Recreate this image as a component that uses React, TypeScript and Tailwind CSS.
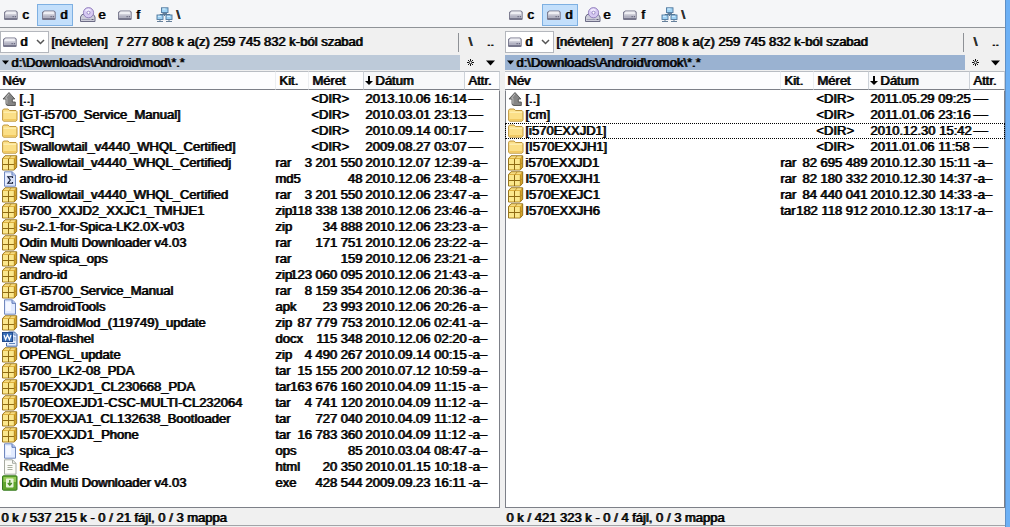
import React from "react";

type Kind = "up" | "folder" | "archive" | "hash" | "file" | "word" | "html" | "exe";

interface Entry {
  kind: Kind;
  name: string;
  ext?: string;
  size?: string;
  date: string;
  focused?: boolean;
}

interface PanelData {
  id: string;
  path: string;
  active: boolean;
  status: string;
  entries: Entry[];
}

const leftPanel: PanelData = {
  id: "left",
  path: "d:\\Downloads\\Android\\mod\\*.*",
  active: false,
  status: "0 k / 537 215 k - 0 / 21 fájl, 0 / 3 mappa",
  entries: [
    { kind: "up", name: "[..]", date: "2013.10.06 16:14" },
    { kind: "folder", name: "[GT-i5700_Service_Manual]", date: "2010.03.01 23:13" },
    { kind: "folder", name: "[SRC]", date: "2010.09.14 00:17" },
    { kind: "folder", name: "[Swallowtail_v4440_WHQL_Certified]", date: "2009.08.27 03:07" },
    { kind: "archive", name: "Swallowtail_v4440_WHQL_Certifiedj", ext: "rar", size: "3 201 550", date: "2010.12.07 12:39" },
    { kind: "hash", name: "andro-id", ext: "md5", size: "48", date: "2010.12.06 23:48" },
    { kind: "archive", name: "Swallowtail_v4440_WHQL_Certified", ext: "rar", size: "3 201 550", date: "2010.12.06 23:47" },
    { kind: "archive", name: "i5700_XXJD2_XXJC1_TMHJE1", ext: "zip", size: "118 338 138", date: "2010.12.06 23:46" },
    { kind: "archive", name: "su-2.1-for-Spica-LK2.0X-v03", ext: "zip", size: "34 888", date: "2010.12.06 23:23" },
    { kind: "archive", name: "Odin Multi Downloader v4.03", ext: "rar", size: "171 751", date: "2010.12.06 23:22" },
    { kind: "archive", name: "New spica_ops", ext: "rar", size: "159", date: "2010.12.06 23:21" },
    { kind: "archive", name: "andro-id", ext: "zip", size: "123 060 095", date: "2010.12.06 21:43" },
    { kind: "archive", name: "GT-i5700_Service_Manual", ext: "rar", size: "8 159 354", date: "2010.12.06 20:36" },
    { kind: "file", name: "SamdroidTools", ext: "apk", size: "23 993", date: "2010.12.06 20:26" },
    { kind: "archive", name: "SamdroidMod_(119749)_update", ext: "zip", size: "87 779 753", date: "2010.12.06 02:41" },
    { kind: "word", name: "rootal-flashel", ext: "docx", size: "115 348", date: "2010.12.06 02:20" },
    { kind: "archive", name: "OPENGL_update", ext: "zip", size: "4 490 267", date: "2010.09.14 00:15" },
    { kind: "archive", name: "i5700_LK2-08_PDA", ext: "tar", size: "15 155 200", date: "2010.07.12 10:59" },
    { kind: "archive", name: "I570EXXJD1_CL230668_PDA", ext: "tar", size: "163 676 160", date: "2010.04.09 11:15" },
    { kind: "archive", name: "I570EOXEJD1-CSC-MULTI-CL232064", ext: "tar", size: "4 741 120", date: "2010.04.09 11:12" },
    { kind: "archive", name: "I570EXXJA1_CL132638_Bootloader", ext: "tar", size: "727 040", date: "2010.04.09 11:12" },
    { kind: "archive", name: "I570EXXJD1_Phone", ext: "tar", size: "16 783 360", date: "2010.04.09 11:12" },
    { kind: "file", name: "spica_jc3", ext: "ops", size: "85", date: "2010.03.04 08:47" },
    { kind: "html", name: "ReadMe", ext: "html", size: "20 350", date: "2010.01.15 10:18" },
    { kind: "exe", name: "Odin Multi Downloader v4.03", ext: "exe", size: "428 544", date: "2009.09.23 16:11" },
  ],
};

const rightPanel: PanelData = {
  id: "right",
  path: "d:\\Downloads\\Android\\romok\\*.*",
  active: true,
  status: "0 k / 421 323 k - 0 / 4 fájl, 0 / 3 mappa",
  entries: [
    { kind: "up", name: "[..]", date: "2011.05.29 09:25" },
    { kind: "folder", name: "[cm]", date: "2011.01.06 23:16" },
    { kind: "folder", name: "[i570EXXJD1]", date: "2010.12.30 15:42", focused: true },
    { kind: "folder", name: "[I570EXXJH1]", date: "2011.01.06 11:58" },
    { kind: "archive", name: "i570EXXJD1", ext: "rar", size: "82 695 489", date: "2010.12.30 15:11" },
    { kind: "archive", name: "I570EXXJH1", ext: "rar", size: "82 180 332", date: "2010.12.30 14:37" },
    { kind: "archive", name: "I570EXEJC1", ext: "rar", size: "84 440 041", date: "2010.12.30 14:33" },
    { kind: "archive", name: "I570EXXJH6", ext: "tar", size: "182 118 912", date: "2010.12.30 13:17" },
  ],
};

function DriveIcon() {
  return (
    <svg width="16" height="16" viewBox="0 0 16 16" className="block shrink-0" aria-hidden="true">
      <path d="M2.300 3.500h9.700l1.700 1.500v7.200l-.8.800H.8L0 12.200V5.300z" fill="#77778c" />
      <path d="M2.600 4.300h9l1.200 1.200v5.500H.9V5.700z" fill="#cfcfd9" />
      <path d="M2.400 4.800h9.200l.6 2.200H1.300z" fill="#efeff4" />
      <path d="M1 8.500h11.600V11H1z" fill="#b2b2c2" />
      <path d="M8.500 9.700h1.300M10.800 9.700h1.300" stroke="#5c5c74" />
    </svg>
  );
}

function DiscIcon() {
  return (
    <svg width="16" height="16" viewBox="0 0 16 16" className="block shrink-0" aria-hidden="true">
      <path d="M2 7.500h11.500l1.500 2.500v4.500H.5V10z" fill="#cdcdd9" stroke="#6c6c86" />
      <path d="M1.500 12.500h9" stroke="#9d9db3" />
      <circle cx="8.500" cy="5.700" r="5.100" fill="#d6c9f2" stroke="#8b78b8" strokeWidth=".9" />
      <path d="M5 3.500a4 4 0 0 1 6-.6L8.500 5.800z" fill="#f1eaff" />
      <circle cx="8.500" cy="5.700" r="1.500" fill="#fff" stroke="#8773b8" strokeWidth=".8" />
      <path d="M11.500 12.500h2" stroke="#5c5c74" />
    </svg>
  );
}

function NetworkIcon() {
  return (
    <svg width="18" height="16" viewBox="0 0 18 16" className="block shrink-0" aria-hidden="true">
      <path d="M8.500 6v3M4 9V7.500h10V9" fill="none" stroke="#5a7894" />
      <g fill="#9fd2f3" stroke="#4e779d" strokeWidth=".9">
        <rect x="5.500" y=".8" width="6.500" height="4.700" />
        <rect x="1" y="8" width="6" height="4.500" />
        <rect x="10" y="8" width="6" height="4.500" />
      </g>
      <path d="M6.500 2h3M2 9.300h3M11 9.300h3" stroke="#daf1ff" />
      <path d="M6.500 6.500h4.500M1 14.500h6M10 14.500h6M4 12.500v2M13 12.500v2" stroke="#66809b" />
    </svg>
  );
}

function FileIcon({ kind }: { kind: Kind }) {
  return (
    <svg width="16" height="16" viewBox="0 0 16 16" className="block shrink-0" aria-hidden="true">
      {kind === "up" && (
        <>
          <path d="M7 1.500 12.800 8h-2.500v3h3v3.500H6a2 2 0 0 1-2-2V8H1z" fill="#858585" stroke="#515151" strokeWidth=".9" strokeLinejoin="round" />
          <path d="M7 2.800 3.500 7.300h1.400v5.500" fill="none" stroke="#b8b8b8" />
        </>
      )}
      {kind === "folder" && (
        <>
          <path d="M.6 3.200 1.600 2h4.500l1.400 1.500H14l1 1.200V13l-1 1.200H1.500L.6 13z" fill="#fbdf87" stroke="#b98c2e" strokeWidth=".9" />
          <path d="M1.500 5.200h12.700" stroke="#fff3bd" />
          <path d="M1.500 12h12.700v1.400H1.500z" fill="#f1c860" />
        </>
      )}
      {kind === "archive" && (
        <>
          <path d="M.5 3.500 3 .8h11.700v11.400l-2.500 2.800H.5z" fill="#d6a528" stroke="#8f6b14" strokeWidth=".9" />
          <path d="M1.300 3.300 3.300 1.300h10.500L12 3.300z" fill="#f6dc82" />
          <path d="M1 4h11v10.500H1z" fill="#fbe78c" />
          <path d="M6.500 4v11M1 9.500h11" fill="none" stroke="#8f6b14" />
          <path d="M12.300 4v11M12.500 9.300l2.200-2.200M6.800 4 9 1" fill="none" stroke="#b08420" strokeWidth=".8" />
        </>
      )}
      {(kind === "file" || kind === "hash") && (
        <>
          <path d="M2.500.8h7.700L13.500 4v11.200h-11z" fill="#e2ebff" stroke="#7188bd" />
          <path d="M4 3h5v9H4z" fill="#f5f8ff" />
          <path d="M10 1v3.300h3.400" fill="#b4c8f4" stroke="#617ab5" />
          {kind === "hash" && (
            <>
              <path d="M4.500 4.500h8.500v9H4.500z" fill="#d8e1f8" />
              <path d="M10.500 7V5.700H5.800L8.300 9l-2.500 3.300h4.700V11" fill="none" stroke="#111a33" strokeWidth="1.100" />
            </>
          )}
        </>
      )}
      {kind === "word" && (
        <>
          <path d="M6.500 1h6l2.500 2.500v11.700H4.500V12" fill="#e3edff" stroke="#4669a5" />
          <path d="M12 1v3h3M11.500 7h2M11.500 9h2M7 12.500h6" fill="none" stroke="#5f85bd" />
          <rect x=".5" y="1.500" width="10" height="9" fill="#386eb7" stroke="#20498c" />
          <path d="m2 4 1.600 4.500L5.500 4l1.900 4.500L9 4" fill="none" stroke="#fff" strokeWidth="1.200" />
        </>
      )}
      {kind === "html" && (
        <>
          <path d="M2.500.8h8L14 4.300v10.900H2.500z" fill="#fcfcf8" stroke="#a6aaa0" />
          <path d="M10.500 1v3.300H14" fill="none" stroke="#a6aaa0" />
          <path d="M5.500 6.500h5M5.500 8.500h5M5.500 10.500h5" stroke="#aab09f" />
        </>
      )}
      {kind === "exe" && (
        <>
          <rect x=".5" y=".8" width="14.500" height="14.400" rx="1" fill="#61a52e" stroke="#34791c" />
          <path d="M1.500 2h12.500v5H1.500z" fill="#93c957" />
          <rect x="4" y="3.500" width="7.500" height="9" rx=".7" fill="#e9f5d9" />
          <path d="M7.800 5v5M5.800 8l2 2.300 2-2.300" fill="none" stroke="#448921" strokeWidth="1.300" />
        </>
      )}
    </svg>
  );
}

const drives = [
  { label: "c", icon: <DriveIcon /> },
  { label: "d", icon: <DriveIcon />, current: true },
  { label: "e", icon: <DiscIcon /> },
  { label: "f", icon: <DriveIcon /> },
  { label: "\\", icon: <NetworkIcon /> },
];

function DriveBar() {
  return (
    <nav aria-label="Meghajtók" className="-ml-px flex h-7 items-center gap-0.5 border-b border-[#8f9398] bg-[#f5f6f8] pt-0.5">
      {drives.map((d) => (
        <button
          key={d.label}
          aria-pressed={!!d.current}
          className={
            d.current
              ? "flex h-[22px] w-9 items-center gap-0.5 border border-[#7eb0e2] bg-[#c3dffb] px-1"
              : "flex h-[22px] w-9 items-center gap-0.5 border border-transparent px-1"
          }
        >
          {d.icon}
          <span>{d.label}</span>
        </button>
      ))}
    </nav>
  );
}

function Panel({ data }: { data: PanelData }) {
  const line = data.active ? "border-l border-[#7d8088]" : "border-[#7d8088]";
  return (
    <section className="flex min-w-0 flex-1 flex-col">
      <DriveBar />
      <div className="flex flex-1 flex-col">
        <div className="mt-[3px] flex h-[22px] items-center">
          <div className="relative mr-0.5">
            <div className="pointer-events-none absolute top-[3px] left-[3px]">
              <DriveIcon />
            </div>
            <select aria-label="Meghajtó" className="block h-[22px] w-[49px] appearance-none border border-[#b4b7bd] bg-white pl-[19px]" defaultValue="d">
              <option>c</option>
              <option>d</option>
              <option>e</option>
              <option>f</option>
            </select>
            <svg width="9" height="6" viewBox="0 0 9 6" className="pointer-events-none absolute top-2 right-1" aria-hidden="true">
              <path d="m1 1 3.500 3.500L8 1" fill="none" stroke="#555" strokeWidth="1.500" />
            </svg>
          </div>
          <div className="flex flex-1 gap-2 whitespace-nowrap">
            <span>[névtelen]</span>
            <span>7 277 808 k a(z) 259 745 832 k-ból szabad</span>
          </div>
          <div className="flex h-[19px] w-[42px] items-center border-l border-[#8e9196]">
            <button aria-label="Gyökérmappa" className="w-[22px]">\</button>
            <button aria-label="Szülőmappa" className="w-[18px]">..</button>
          </div>
        </div>
        <div className="mt-0.5 flex h-[15px] items-center">
          <div
            className={
              data.active
                ? "flex h-[15px] flex-1 items-center gap-px bg-[#9ab2d1] pl-0.5"
                : "flex h-[15px] flex-1 items-center gap-px bg-[#bdcad9] pl-0.5"
            }
          >
            <svg width="8" height="5" viewBox="0 0 8 5" aria-hidden="true">
              <path d="M0 .5h7L3.500 4.500z" />
            </svg>
            <span>{data.path}</span>
          </div>
          <button aria-label="Kedvencek" className="flex w-5 justify-center">
            <svg width="9" height="9" viewBox="0 0 9 9" aria-hidden="true">
              <path d="M4.500 1v7M1 4.500h7M2 2l5 5M7 2l-5 5" stroke="#111" />
              <rect x="3.500" y="3.500" width="2" height="2" fill="#fff" />
            </svg>
          </button>
          <button aria-label="Előzmények" className="flex w-5 justify-center">
            <svg width="9" height="6" viewBox="0 0 9 6" aria-hidden="true">
              <path d="M0 .5h9L4.500 5.500z" />
            </svg>
          </button>
        </div>
        <table className="mt-px w-full table-fixed border-separate border-spacing-0 bg-white">
          <colgroup>
            <col />
            <col className="w-[33px]" />
            <col className="w-[55px]" />
            <col className="w-[102px]" />
            <col className="w-[35px]" />
          </colgroup>
          <thead>
            <tr className="h-[19px] bg-[#fdfdfe] text-left [&>th]:border-t [&>th]:border-b [&>th]:border-t-[#b9bdc3] [&>th]:border-b-[#7d8088] [&>th]:font-normal">
              <th className="pl-0.5">Név</th>
              <th className="border-l border-l-[#eceef1] pl-[3px]">Kit.</th>
              <th className="border-l border-l-[#eceef1] pl-[3px]">Méret</th>
              <th className="border-x border-x-[#cdd2d9] bg-[#f7f8fa]">
                <span className="flex items-center gap-0.5 pl-px">
                  <svg width="8" height="9" viewBox="0 0 8 9" aria-hidden="true">
                    <path d="M3 0h2v5h3L4 9 0 5h3z" />
                  </svg>
                  Dátum
                </span>
              </th>
              <th className="border-r border-r-[#cdd2d9] pl-[3px]">Attr.</th>
            </tr>
          </thead>
          <tbody className="[&>tr:first-child>td]:border-t [&>tr:first-child>td]:border-t-white">
            {data.entries.map((e, i) => (
              <tr
                key={i}
                className={
                  e.focused
                    ? "h-4 whitespace-nowrap outline-1 -outline-offset-1 outline-dotted outline-black"
                    : "h-4 whitespace-nowrap"
                }
              >
                <td className={line}>
                  <span className="flex items-center gap-px pl-0.5">
                    <FileIcon kind={e.kind} />
                    {e.name}
                  </span>
                </td>
                <td>{e.ext}</td>
                <td>
                  {e.size ? (
                    <span className="flex justify-end pr-px">{e.size}</span>
                  ) : (
                    <span className="pl-[3px]">&lt;DIR&gt;</span>
                  )}
                </td>
                <td className="pl-0.5">{e.date}</td>
                <td className="border-r border-[#7d8088] pl-[3px]">{e.size ? "-a–" : "––"}</td>
              </tr>
            ))}
          </tbody>
        </table>
        <div
          className={
            data.active
              ? "flex-1 border-x border-b border-[#7d8088] bg-white"
              : "flex-1 border-r border-b border-[#7d8088] bg-white"
          }
        />
        <footer className="mb-px flex h-[18px] items-center border-b border-[#a2a4a8] pt-0.5 pl-px">{data.status}</footer>
      </div>
    </section>
  );
}

export default function App() {
  return (
    <main className="flex min-h-screen bg-[#f0f0f0] font-['Liberation_Sans',Arial,sans-serif] text-[13px] leading-4 text-black [text-shadow:1px_0_0_currentColor] [&_button]:[text-shadow:inherit] [&_select]:[text-shadow:inherit]">
      <Panel data={leftPanel} />
      <div className="flex w-[5px] flex-col justify-between pb-px">
        <div className="h-7 border-b border-[#8f9398] bg-[#f5f6f8]" />
        <div className="h-px bg-[#a2a4a8]" />
      </div>
      <Panel data={rightPanel} />
      <div className="w-[5px] border-l border-[#5f8fc4] bg-[#6cb0f5]" />
    </main>
  );
}
